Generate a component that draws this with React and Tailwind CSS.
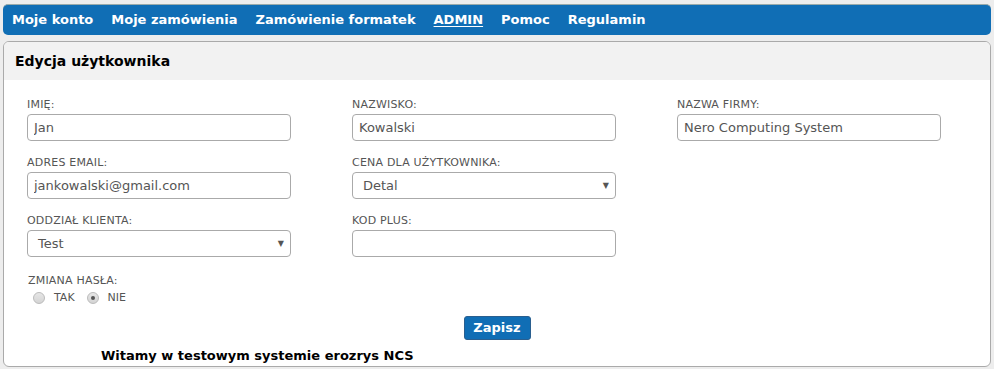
import { useState } from 'react';

const font = { fontFamily: '"DejaVu Sans", Verdana, sans-serif' };

function Field({ label, children }) {
  return (
    <div className="flex flex-col pt-[2px]">
      <label className="h-[14px] text-[11px] leading-[14px] text-[#555] uppercase tracking-[0.2px]">{label}</label>
      <div className="mt-[2px]">{children}</div>
    </div>
  );
}

function TextInput({ value }) {
  return (
    <input
      type="text"
      defaultValue={value}
      className="w-[264px] h-[27px] border border-[#aaa] rounded-[4px] px-[6px] text-[13px] text-[#555] bg-white outline-none"
      style={font}
    />
  );
}

function Select({ value }) {
  return (
    <div className="relative w-[264px] h-[27px] border border-[#aaa] rounded-[4px] bg-white flex items-center pl-[10px] text-[13px] text-[#555]">
      {value}
      <span className="absolute right-[6px] top-[7px] text-[8px] text-[#555]">▼</span>
    </div>
  );
}

function Radio({ checked, label }) {
  return (
    <span className="flex items-center gap-[9px]">
      <span className="w-[12px] h-[12px] rounded-full border border-[#bbb] bg-gradient-to-b from-[#e6e6e6] to-[#d4d4d4] flex items-center justify-center">
        {checked && <span className="w-[4px] h-[4px] rounded-full bg-[#555]" />}
      </span>
      <span className="text-[11px] text-[#555]">{label}</span>
    </span>
  );
}

export default function App() {
  const [menu] = useState(['Moje konto', 'Moje zamówienia', 'Zamówienie formatek', 'ADMIN', 'Pomoc', 'Regulamin']);

  return (
    <div className="min-h-screen bg-[#ededed] px-[3px] pt-[4px]" style={font}>
      <nav className="h-[31px] rounded-[5px] bg-[#106eb5] border-t border-[#9aa] flex items-center gap-[18px] pl-[9px] text-white font-bold text-[13px]">
        {menu.map((m) => (
          <a key={m} className={m === 'ADMIN' ? 'underline underline-offset-2' : ''}>{m}</a>
        ))}
      </nav>

      <div className="mt-[6px] h-[326px] rounded-[6px] border border-[#aaa] bg-white flex flex-col">
        <div className="h-[38px] bg-[#f2f2f2] rounded-t-[5px] flex items-center pl-[11px] font-bold text-[14px] text-black">
          Edycja użytkownika
        </div>

        <div className="grid grid-cols-[325px_325px_325px] pl-[23px] pt-[16px] gap-y-[13px]">
          <Field label="Imię:"><TextInput value="Jan" /></Field>
          <Field label="Nazwisko:"><TextInput value="Kowalski" /></Field>
          <Field label="Nazwa firmy:"><TextInput value="Nero Computing System" /></Field>

          <Field label="Adres email:"><TextInput value="jankowalski@gmail.com" /></Field>
          <Field label="Cena dla użytkownika:"><Select value="Detal" /></Field>
          <div />

          <Field label="Oddział klienta:"><Select value="Test" /></Field>
          <Field label="Kod plus:"><TextInput value="" /></Field>
          <div />
        </div>

        <div className="pl-[24px] mt-[17px]">
          <div className="h-[14px] text-[11px] leading-[14px] text-[#555] tracking-[0.2px]">ZMIANA HASŁA:</div>
          <div className="flex items-center gap-[12px] pl-[5px] mt-[2px]">
            <Radio label="TAK" />
            <Radio checked label="NIE" />
          </div>
        </div>

        <div className="flex justify-center mt-[9px]">
          <button className="w-[67px] h-[24px] rounded-[3px] border border-[#2a5f8f] bg-[#106eb5] text-white font-bold text-[13px]">
            Zapisz
          </button>
        </div>

        <div className="pl-[97px] mt-[6px] font-bold text-[13px] text-black">
          Witamy w testowym systemie erozrys NCS
        </div>
      </div>
    </div>
  );
}
